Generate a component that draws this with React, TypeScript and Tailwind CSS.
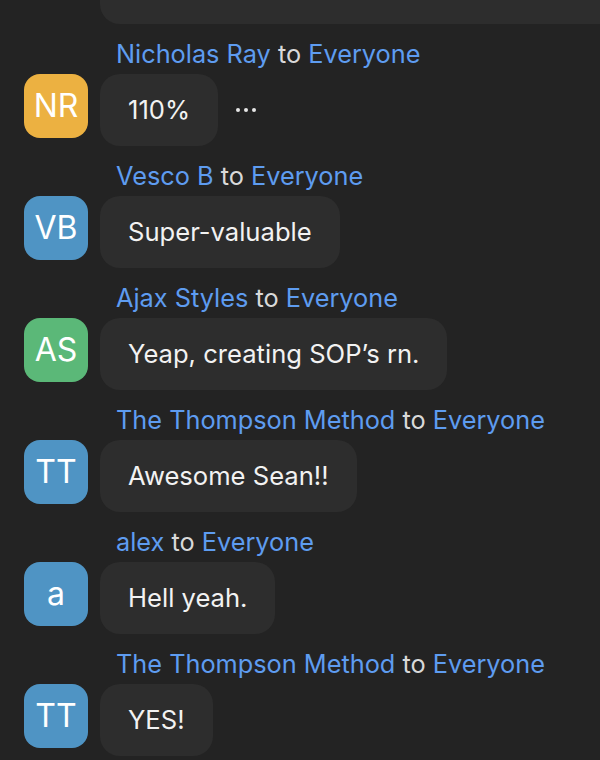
import React from 'react'

interface Message {
  initials: string
  name: string
  text: string
  avatar: string
  more?: boolean
}

const MESSAGES: Message[] = [
  { initials: 'NR', name: 'Nicholas Ray', text: '110%', avatar: 'bg-[#ecb141]', more: true },
  { initials: 'VB', name: 'Vesco B', text: 'Super-valuable', avatar: 'bg-[#4f94c4]' },
  { initials: 'AS', name: 'Ajax Styles', text: 'Yeap, creating SOP’s rn.', avatar: 'bg-[#5bb878]' },
  { initials: 'TT', name: 'The Thompson Method', text: 'Awesome Sean!!', avatar: 'bg-[#4f94c4]' },
  { initials: 'a', name: 'alex', text: 'Hell yeah.', avatar: 'bg-[#4f94c4]' },
  { initials: 'TT', name: 'The Thompson Method', text: 'YES!', avatar: 'bg-[#4f94c4]' },
]

export default function App() {
  return (
    <div className="h-[760px] w-[600px] overflow-hidden bg-[#232323] font-['Inter','Noto_Sans',sans-serif]">
      {/* previous message, scrolled mostly out of view */}
      <div className="pl-[100px]">
        <div className="-mt-[48px] h-[72px] w-[560px] rounded-[20px] bg-[#2d2d2d] px-[28px] pt-[17px] text-[25.6px] leading-[32px] text-[#f2f2f2] whitespace-nowrap">
          Exactly the better choice
        </div>
      </div>

      {MESSAGES.map((m, i) => (
        <div key={i} className="mt-[14px]">
          <div className="pl-[116px] text-[25.3px] leading-[32px] whitespace-nowrap">
            <span className="text-[#5e9cf0]">{m.name}</span>
            <span className="text-[#d9d9d9]"> to </span>
            <span className="text-[#5e9cf0]">Everyone</span>
          </div>
          <div className="mt-1 flex items-start gap-3 pl-6">
            <div
              className={`flex h-16 w-16 shrink-0 items-center justify-center rounded-[16px] text-[32px] text-white ${m.avatar}`}
            >
              {m.initials}
            </div>
            <div className="rounded-[20px] bg-[#2d2d2d] px-[28px] py-[20px] text-[25.6px] leading-[32px] text-[#f2f2f2] whitespace-nowrap">
              {m.text}
            </div>
            {m.more && (
              <div className="ml-[6px] flex gap-1 self-center">
                <span className="h-1 w-1 rounded-full bg-[#e6e6e6]" />
                <span className="h-1 w-1 rounded-full bg-[#e6e6e6]" />
                <span className="h-1 w-1 rounded-full bg-[#e6e6e6]" />
              </div>
            )}
          </div>
        </div>
      ))}
    </div>
  )
}
